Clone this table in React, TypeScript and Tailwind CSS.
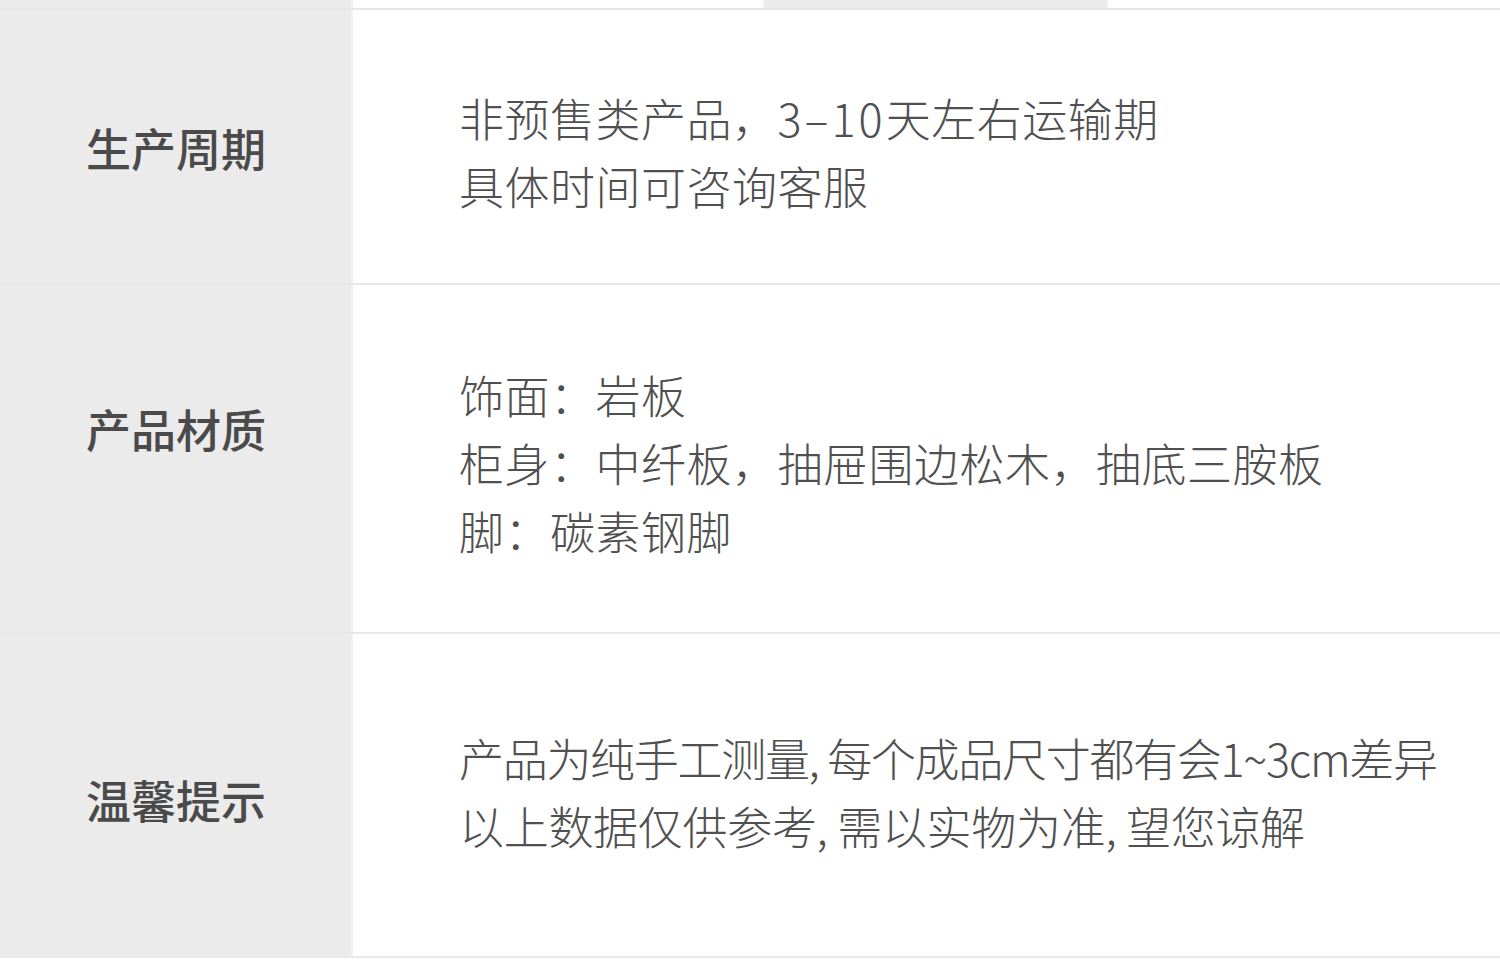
import type { ReactNode } from "react"

const rows: {
    label: string
    lines: ReactNode[]
    height: string
    labelPad: string
    textPad: string
    track: string
}[] = [
    {
        label: "生产周期",
        lines: [
            <>非预售类产品，<span className="tracking-[3px]">3–10</span>天左右运输期</>,
            "具体时间可咨询客服",
        ],
        height: "h-[273px]",
        labelPad: "pt-[104px]",
        textPad: "pt-[74px]",
        track: "tracking-[0.5px]",
    },
    {
        label: "产品材质",
        lines: ["饰面：岩板", "柜身：中纤板，抽屉围边松木，抽底三胺板", "脚：碳素钢脚"],
        height: "h-[347px]",
        labelPad: "pt-[110px]",
        textPad: "pt-[76px]",
        track: "tracking-[0.5px]",
    },
    {
        label: "温馨提示",
        lines: [
            <span className="tracking-[-1.3px]">产品为纯手工测量, 每个成品尺寸都有会1~3cm差异</span>,
            "以上数据仅供参考, 需以实物为准, 望您谅解",
        ],
        height: "h-[322px]",
        labelPad: "pt-[132px]",
        textPad: "pt-[90px]",
        track: "tracking-[-0.3px]",
    },
]

const App = () => {
    return (
        <div className="w-[1500px] h-[978px] bg-white overflow-hidden font-['Noto_Sans_CJK_SC','Noto_Sans',sans-serif] text-[#4a4a4a]">
            {/* top strip, tail of previous table */}
            <div className="flex h-[8px]">
                <div className="w-[353px] bg-[#ebebeb] border-r-2 border-[#f1f1f1]" />
                <div className="w-[410px] bg-white" />
                <div className="w-[345px] bg-[#ebebeb] border-x-2 border-[#f1f1f1]" />
                <div className="flex-1 bg-white" />
            </div>
            <div className="h-[2px] bg-[#e6e6e6]" />

            {rows.map((row) => (
                <div key={row.label} className="border-b-2 border-[#e8e8e8]">
                    <div className={`flex ${row.height}`}>
                        <div className={`w-[353px] shrink-0 bg-[#ebebeb] border-r-2 border-[#f1f1f1] pl-[86px] ${row.labelPad}`}>
                            <p className="text-[45px] leading-[68px] font-medium text-[#4a4a4a]">{row.label}</p>
                        </div>
                        <div className={`flex-1 pl-[106px] ${row.textPad}`}>
                            {row.lines.map((line, i) => (
                                <p key={i} className={`text-[45px] leading-[68px] font-light text-[#505050] whitespace-nowrap ${row.track}`}>{line}</p>
                            ))}
                        </div>
                    </div>
                </div>
            ))}
        </div>
    )
}

export default App
